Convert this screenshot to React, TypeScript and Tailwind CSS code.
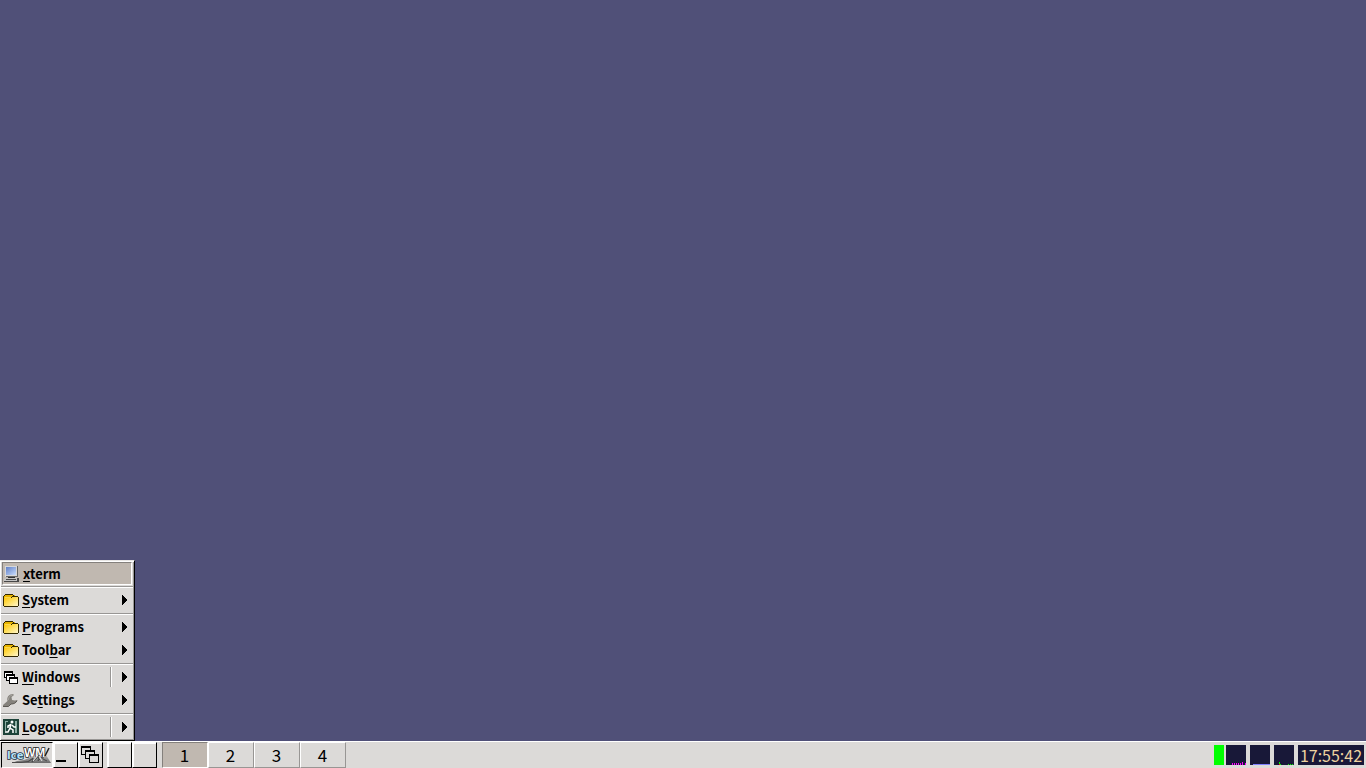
import React from 'react';

function Terminal() {
  return (
    <svg width="16" height="16" viewBox="0 0 16 16" shapeRendering="crispEdges" aria-hidden="true">
      <defs>
        <linearGradient id="screen" x1="0" y1="0" x2="1" y2="1">
          <stop offset="0" stopColor="#5f7fc8" />
          <stop offset="1" stopColor="#c9dcfb" />
        </linearGradient>
      </defs>
      <path d="M1 0h12v11H1z" fill="#d8d8d8" />
      <path d="M13 0h1v11H2v-1h11z" fill="#666" />
      <path d="M2 1h10v8H2z" fill="url(#screen)" />
      <path d="M4 11h7v1H4z" fill="#333" />
      <path d="M1 12h12v3H0v-2h1z" fill="#c4c4c4" />
      <path d="M2 13h10v1H2zM0 15h14v1H0zM13 12h2v4h-2z" fill="#484848" />
    </svg>
  );
}

function Folder() {
  return (
    <svg width="16" height="16" viewBox="0 0 16 16" shapeRendering="crispEdges" aria-hidden="true">
      <defs>
        <linearGradient id="folder" x1="0" y1="0" x2="1" y2="1">
          <stop offset="0" stopColor="#ffc400" />
          <stop offset="0.5" stopColor="#ffe060" />
          <stop offset="1" stopColor="#fff6cc" />
        </linearGradient>
      </defs>
      <path d="M2 3h9l2 2v1H1V4h1z" fill="#e8b400" />
      <path d="M1 5h14v9H1z" fill="url(#folder)" />
      <path d="M2 2h8v1H2zM1 3h1v1H1zM10 3h1v1h-1zM0 4h1v10H0zM9 4h6v1H9zM8 5h1v1H8zM15 5h1v9h-1zM1 14h14v1H1z" fill="#332900" />
      <path d="M2 5h6v1H2z" fill="#f8d850" />
    </svg>
  );
}

function SmallWindows() {
  return (
    <svg width="16" height="16" viewBox="0 0 16 16" shapeRendering="crispEdges" aria-hidden="true">
      {[
        [1, 2],
        [3, 5],
        [6, 8],
      ].map(([x, y]) => (
        <g key={x}>
          <rect x={x} y={y} width="9" height="7" />
          <rect x={x + 1} y={y + 2} width="7" height="4" fill="#fff" />
        </g>
      ))}
    </svg>
  );
}

function LargeWindows() {
  return (
    <svg width="20" height="20" viewBox="0 0 20 20" shapeRendering="crispEdges" aria-hidden="true">
      {[1, 5, 9].map((n) => (
        <g key={n}>
          <rect x={n} y={n} width="10" height="9" />
          <rect x={n + 1} y={n + 2} width="8" height="6" fill="#dcdad8" />
        </g>
      ))}
    </svg>
  );
}

function Wrench() {
  return (
    <svg width="16" height="16" viewBox="0 0 16 16" aria-hidden="true">
      <path d="M0 13 4.500 9C3.500 5 6 2 10 2l1 1L8.500 5l.5 3 3 .5L14 8c-.5 3-3 4-6 4l-2.500 2.500H0z" fill="#85827c" />
      <path d="M0 14.500h5.500L8 12c3 0 5-1 6-3.500" fill="none" stroke="#5c5954" />
      <path d="M5.500 8c0-3 1.500-4.500 4-5" fill="none" stroke="#aaa7a2" />
    </svg>
  );
}

function Exit() {
  return (
    <svg width="16" height="16" viewBox="0 0 16 16" aria-hidden="true">
      <path d="M0 0h16v16H0z" fill="#1c4238" />
      <path d="M2 2h3v1H3v9H2zM12 2h2v12h-2z" fill="#8fb0a5" />
      <circle cx="9" cy="3" r="1.500" fill="#fff" />
      <path d="M8 5 7 9l3 2v3M7 9l-2 4H2M8 5.500 5 7v2M9 6l2 2h2" fill="none" stroke="#fff" strokeWidth="1.500" />
    </svg>
  );
}

function Logo() {
  return (
    <svg width="48" height="22" viewBox="0 0 48 22" aria-hidden="true">
      <defs>
        <linearGradient id="rock" x1="0" y1="0" x2="0" y2="1">
          <stop offset="0" stopColor="#c4c4c4" />
          <stop offset="1" stopColor="#686868" />
        </linearGradient>
      </defs>
      <text x="21" y="13" fontFamily="Liberation Sans, sans-serif" fontWeight="bold" fontSize="12" fill="#fff" stroke="#222" strokeWidth="1.500" paintOrder="stroke">WM</text>
      <path d="M9 19l5-2 7-1 5-2 3-2 3 2 4-4 4 4 3-3 5 8z" fill="url(#rock)" />
      <path d="M9 18.500h9l7-1 5-3M25 18l5-4-1 4 5-4 2-3-1 6 4-4 1 2 4 2" fill="none" stroke="#4a4a4a" />
      <path d="m30 17 5-6M36 12l3 5" fill="none" stroke="#e4e4e4" />
      <path d="m42 12 4-8" fill="none" stroke="#222" strokeWidth="1.500" />
      <text x="4" y="15" fontFamily="DejaVu Sans, sans-serif" fontWeight="bold" fontSize="10" fill="#b4e2fa" stroke="#182838" strokeWidth="1.500" paintOrder="stroke">Ice</text>
    </svg>
  );
}

type Item = {
  before?: string;
  key: string;
  after: string;
  icon: React.ReactNode;
  active?: boolean;
  split?: boolean;
};

const groups: Item[][] = [
  [{ key: 'x', after: 'term', icon: <Terminal />, active: true }],
  [{ key: 'S', after: 'ystem', icon: <Folder /> }],
  [
    { key: 'P', after: 'rograms', icon: <Folder /> },
    { before: 'Tool', key: 'b', after: 'ar', icon: <Folder /> },
  ],
  [
    { key: 'W', after: 'indows', icon: <SmallWindows />, split: true },
    { before: 'Se', key: 't', after: 'tings', icon: <Wrench /> },
  ],
  [{ key: 'L', after: 'ogout...', icon: <Exit />, split: true }],
];

function MenuItem({ item }: { item: Item }) {
  return (
    <button
      type="button"
      role="menuitem"
      className={
        'flex h-[23px] w-full items-center border pb-px text-left ' +
        (item.active
          ? 'border-t-[#84807c] border-r-white border-b-white border-l-[#84807c] bg-[#c0b8b0] pt-[2px] pl-px'
          : 'border-transparent')
      }
    >
      {item.icon}
      <span className="flex-1 pl-[3px] leading-[18px] whitespace-pre">
        {item.before}
        <span className="underline decoration-black decoration-1 underline-offset-2 [text-decoration-skip-ink:none]">{item.key}</span>
        {item.after}
      </span>
      {!item.active && (
        <span className={'flex h-5 w-[21px] items-center border-l pl-[11px] ' + (item.split ? 'border-[#989694] shadow-[inset_1px_0_0_white]' : 'border-transparent')}>
          <svg width="6" height="10" viewBox="0 0 6 10" shapeRendering="crispEdges" aria-hidden="true">
            <path d="M0 0h1v1h1v1h1v1h1v1h1v2H4v1H3v1H2v1H1v1H0z" />
          </svg>
        </span>
      )}
    </button>
  );
}

function TrayButton({ label, children }: { label: string; children?: React.ReactNode }) {
  return (
    <button
      type="button"
      aria-label={label}
      className="flex h-[26px] w-[25px] items-center border border-t-white border-r-black border-b-black border-l-white bg-[#dcdad8] pl-px shadow-[inset_1px_1px_0_white]"
    >
      {children}
    </button>
  );
}

function Monitor({ label, children }: { label: string; children: React.ReactNode }) {
  return (
    <svg role="img" aria-label={label} width="20" height="20" viewBox="0 0 20 20" shapeRendering="crispEdges" className="bg-[#181838]">
      {children}
    </svg>
  );
}

export default function App() {
  return (
    <div className="flex min-h-screen flex-col bg-[#505078] font-['Noto_Sans_CJK_SC','Noto_Sans',sans-serif] text-black">
      <main className="flex flex-1 items-end">
        <div
          role="menu"
          className="w-[135px] border-t border-r border-b border-t-[#e8e6e4] border-r-black border-b-black bg-[#dcdad8] pt-px pr-[2px] pb-px pl-[2px] text-[13px] font-bold shadow-[inset_1px_1px_0_white,inset_-1px_-1px_0_#989694]"
        >
          {groups.map((group, i) => (
            <React.Fragment key={i}>
              {i > 0 && (
                <div role="separator" className="-mx-px flex h-1 items-center">
                  <div className="h-[2px] w-full border-t border-b border-t-[#989694] border-b-white" />
                </div>
              )}
              {group.map((item) => (
                <MenuItem key={item.key} item={item} />
              ))}
            </React.Fragment>
          ))}
        </div>
      </main>
      <footer className="flex h-[27px] items-stretch border-t border-white bg-[#dcdad8] pl-px">
        <button type="button" aria-label="IceWM menu" className="flex w-[52px] items-center justify-center border border-t-black border-r-white border-b-white border-l-black bg-[#dcdad8]">
          <Logo />
        </button>
        <TrayButton label="Show desktop">
          <svg width="20" height="20" viewBox="0 0 20 20" shapeRendering="crispEdges" aria-hidden="true">
            <path d="M1 15h10v2H1z" />
          </svg>
        </TrayButton>
        <TrayButton label="Window list">
          <LargeWindows />
        </TrayButton>
        <div className="ml-[4px] flex">
          <TrayButton label="Launcher one" />
          <TrayButton label="Launcher two" />
        </div>
        <nav aria-label="Workspaces" className="ml-[5px] flex text-[17px]">
          {[1, 2, 3, 4].map((n) => (
            <button
              key={n}
              type="button"
              className={
                'w-[46px] border pr-px leading-6 ' +
                (n === 1
                  ? 'border-t-[#84807c] border-r-white border-b-white border-l-[#84807c] bg-[#c0b8b0]'
                  : 'border-t-white border-r-[#989694] border-b-[#989694] border-l-white')
              }
            >
              {n}
            </button>
          ))}
        </nav>
        <div className="ml-auto flex items-center gap-1 pr-[2px]">
          <div className="flex items-center gap-[2px]">
            <div className="h-5 w-[10px] bg-[#00ff00]" />
            <Monitor label="Processor load">
              <path d="M6 18h1v2H6zM8 18h1v2H8zM10 18h1v2h-1zM12 18h1v2h-1zM14 18h1v2h-1zM16 17h1v3h-1zM19 18h1v2h-1z" fill="#ff00ff" />
            </Monitor>
          </div>
          <Monitor label="Memory use">
            <path d="M3 19h17v1H3z" fill="#8080ff" />
          </Monitor>
          <Monitor label="Network traffic">
            <path d="M5 17h1v2H5zM6 19h1v1H6zM14 19h1v1h-1zM16 19h1v1h-1zM18 19h1v1h-1z" fill="#00ff00" />
            <path d="M5 19h1v1H5z" fill="#ff0000" />
          </Monitor>
          <time className="h-5 w-[66px] bg-[#181838] text-center text-[16px] leading-5 text-[#ecd2a0]">17:55:42</time>
        </div>
      </footer>
    </div>
  );
}
